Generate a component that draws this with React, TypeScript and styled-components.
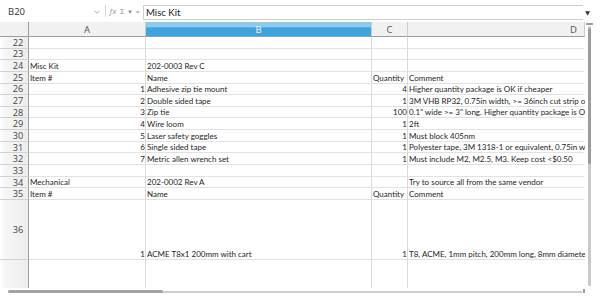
import React from 'react';
import styled, { createGlobalStyle } from 'styled-components';

const ROW_H = 11.65;
const COLS = '29px 117px 226px 36px 1fr';

const GlobalStyle = createGlobalStyle`
  html, body {
    margin: 0;
    padding: 0;
    background: #ffffff;
    overflow: hidden;
  }
`;

const Window = styled.div`
  width: 600px;
  height: 299px;
  display: flex;
  flex-direction: column;
  background: #ffffff;
  font-family: 'Open Sans', 'DejaVu Sans', sans-serif;
  overflow: hidden;
`;

const FormulaBar = styled.div`
  height: 22px;
  display: flex;
  align-items: center;
  padding: 0 8px 0 8px;
  box-sizing: border-box;
`;

const NameBox = styled.div`
  width: 93px;
  height: 15px;
  display: flex;
  align-items: center;
  justify-content: space-between;
  font-size: 9.5px;
  color: #333;
  padding-right: 1px;
  box-sizing: border-box;
`;

const Divider = styled.div`
  width: 1px;
  height: 12px;
  background: #d6d6d6;
  margin: 0 3px 0 4px;
`;

const ToolIcons = styled.div`
  display: flex;
  align-items: center;
  gap: 4px;
  width: 34px;
  flex-shrink: 0;
  overflow: hidden;
  font-size: 7px;
  color: #8a8a8a;
`;

const FormulaInput = styled.div`
  flex: 1;
  height: 15px;
  margin-top: 3px;
  border: 1px solid #cfcfcf;
  border-right: none;
  box-sizing: border-box;
  display: flex;
  align-items: center;
  padding-left: 2px;
  font-family: 'Lato', sans-serif;
  font-size: 9.6px;
  color: #222;
`;

const ExpandArrow = styled.div`
  width: 9px;
  display: flex;
  align-items: center;
  justify-content: center;
  margin-top: 3px;
  font-size: 6px;
  color: #333;
`;

const SheetArea = styled.div`
  flex: 1;
  display: flex;
  min-height: 0;
`;

const Grid = styled.div`
  width: 585px;
  display: grid;
  grid-template-columns: ${COLS};
  align-content: start;
  overflow: hidden;
  position: relative;
`;

const ColHeader = styled.div<{ $selected?: boolean; $align?: string }>`
  height: 15px;
  box-sizing: border-box;
  border-right: 1px solid #cdcdcd;
  border-bottom: 1px solid #9d9d9d;
  background: ${(p) =>
    p.$selected
      ? 'linear-gradient(#8bcbef 0%, #8bcbef 38%, #3fa3dd 40%, #3fa3dd 100%)'
      : '#f1f1f1'};
  color: ${(p) => (p.$selected ? '#eaf6fd' : '#555')};
  font-size: 9.5px;
  display: flex;
  align-items: center;
  justify-content: ${(p) => p.$align || 'center'};
  padding: 0 7px 0 0;
  padding-left: ${(p) => (p.$align ? '0' : '7px')};
`;

const Corner = styled.div`
  height: 15px;
  box-sizing: border-box;
  background: #f1f1f1;
  border-right: 1px solid #9d9d9d;
  border-bottom: 1px solid #9d9d9d;
`;

const RowHeader = styled.div<{ $h: number }>`
  height: ${(p) => p.$h}px;
  box-sizing: border-box;
  background: linear-gradient(90deg, #ffffff 0px, #f6f6f6 5px, #eeeeee 100%);
  border-right: 1px solid #9d9d9d;
  border-bottom: 1px solid #d2d2d2;
  display: flex;
  align-items: center;
  justify-content: center;
  padding-left: 8px;
  font-size: 9.2px;
  color: #444;
`;

const Cell = styled.div<{ $h: number; $right?: boolean; $last?: boolean }>`
  height: ${(p) => p.$h}px;
  box-sizing: border-box;
  border-right: 1px solid ${(p) => (p.$last ? 'transparent' : '#dadada')};
  border-bottom: 1px solid #e2e2e2;
  display: flex;
  align-items: flex-end;
  justify-content: ${(p) => (p.$right ? 'flex-end' : 'flex-start')};
  padding: 0 0 0 1px;
  font-family: 'Lato', sans-serif;
  font-size: 8px;
  line-height: 10px;
  color: #1e1e1e;
  white-space: nowrap;
  min-width: 0;
`;

const CellText = styled.span`
  position: relative;
  z-index: 1;
`;

const VScroll = styled.div`
  width: 15px;
  position: relative;
`;

const VTrack = styled.div`
  position: absolute;
  left: 3px;
  top: 4px;
  bottom: 2px;
  width: 3px;
  background: #c9c9c9;
  border-radius: 2px;
`;

const VThumb = styled.div`
  position: absolute;
  left: 3px;
  top: 6px;
  height: 136px;
  width: 3px;
  background: #9c9c9c;
  border-radius: 2px;
`;

const VCap = styled.div`
  position: absolute;
  left: 1px;
  top: 1px;
  width: 7px;
  height: 2px;
  background: #9c9c9c;
`;

const HScroll = styled.div`
  height: 11px;
  position: relative;
`;

const HTrack = styled.div`
  position: absolute;
  left: 8px;
  width: 574px;
  top: 3px;
  height: 2px;
  background: #cfcfcf;
`;

const HThumb = styled.div`
  position: absolute;
  left: 8px;
  width: 155px;
  top: 2px;
  height: 3px;
  background: #a3a3a3;
  border-radius: 2px;
`;

const HCap = styled.div`
  position: absolute;
  left: 583px;
  top: 1px;
  width: 2px;
  height: 4px;
  background: #9c9c9c;
`;

type Row = {
  n?: number;
  h?: number;
  a?: string;
  b?: string;
  c?: string;
  d?: string;
  aNum?: boolean;
  cNum?: boolean;
};

const rows: Row[] = [
  { n: 22 },
  { n: 23 },
  { n: 24, a: 'Misc Kit', b: '202-0003 Rev C' },
  { n: 25, a: 'Item #', b: 'Name', c: 'Quantity', d: 'Comment' },
  { n: 26, a: '1', b: 'Adhesive zip tie mount', c: '4', d: 'Higher quantity package is OK if cheaper', aNum: true, cNum: true },
  { n: 27, a: '2', b: 'Double sided tape', c: '1', d: '3M VHB RP32, 0.75in width, >= 36inch cut strip or roll', aNum: true, cNum: true },
  { n: 28, a: '3', b: 'Zip tie', c: '100', d: '0.1" wide >= 3" long. Higher quantity package is OK if cheaper', aNum: true, cNum: true },
  { n: 29, a: '4', b: 'Wire loom', c: '1', d: '2ft', aNum: true, cNum: true },
  { n: 30, a: '5', b: 'Laser safety goggles', c: '1', d: 'Must block 405nm', aNum: true, cNum: true },
  { n: 31, a: '6', b: 'Single sided tape', c: '1', d: 'Polyester tape, 3M 1318-1 or equivalent, 0.75in width', aNum: true, cNum: true },
  { n: 32, a: '7', b: 'Metric allen wrench set', c: '1', d: 'Must include M2, M2.5, M3. Keep cost <$0.50', aNum: true, cNum: true },
  { n: 33 },
  { n: 34, a: 'Mechanical', b: '202-0002 Rev A', d: 'Try to source all from the same vendor' },
  { n: 35, a: 'Item #', b: 'Name', c: 'Quantity', d: 'Comment' },
  { n: 36, h: 60.5, a: '1', b: 'ACME T8x1 200mm with cart', c: '1', d: 'T8, ACME, 1mm pitch, 200mm long, 8mm diameter', aNum: true, cNum: true },
  { h: 40 },
];

const ChevronDown = () => (
  <svg width="6" height="4" viewBox="0 0 6 4" style={{ marginTop: 2 }}>
    <path d="M0.5 0.8 L3 3.2 L5.5 0.8" fill="none" stroke="#a0a0a0" strokeWidth="0.9" />
  </svg>
);

export default function App() {
  return (
    <Window>
      <GlobalStyle />
      <FormulaBar>
        <NameBox>
          <span>B20</span>
          <ChevronDown />
        </NameBox>
        <Divider />
        <ToolIcons>
          <span style={{ fontStyle: 'italic' }}>ƒx</span>
          <span>Σ</span>
          <span>▾</span>
          <span>=</span>
        </ToolIcons>
        <FormulaInput>Misc Kit</FormulaInput>
        <ExpandArrow>▼</ExpandArrow>
      </FormulaBar>
      <SheetArea>
        <Grid>
          <Corner />
          <ColHeader>A</ColHeader>
          <ColHeader $selected>B</ColHeader>
          <ColHeader>C</ColHeader>
          <ColHeader $align="flex-end">D</ColHeader>
          {rows.map((r, i) => {
            const h = r.h ?? ROW_H;
            return (
              <React.Fragment key={i}>
                <RowHeader $h={h}>{r.n}</RowHeader>
                <Cell $h={h} $right={r.aNum}>
                  <CellText>{r.a}</CellText>
                </Cell>
                <Cell $h={h}>
                  <CellText>{r.b}</CellText>
                </Cell>
                <Cell $h={h} $right={r.cNum}>
                  <CellText>{r.c}</CellText>
                </Cell>
                <Cell $h={h} $last>
                  <CellText>{r.d}</CellText>
                </Cell>
              </React.Fragment>
            );
          })}
        </Grid>
        <VScroll>
          <VCap />
          <VTrack />
          <VThumb />
        </VScroll>
      </SheetArea>
      <HScroll>
        <HTrack />
        <HThumb />
        <HCap />
      </HScroll>
    </Window>
  );
}
